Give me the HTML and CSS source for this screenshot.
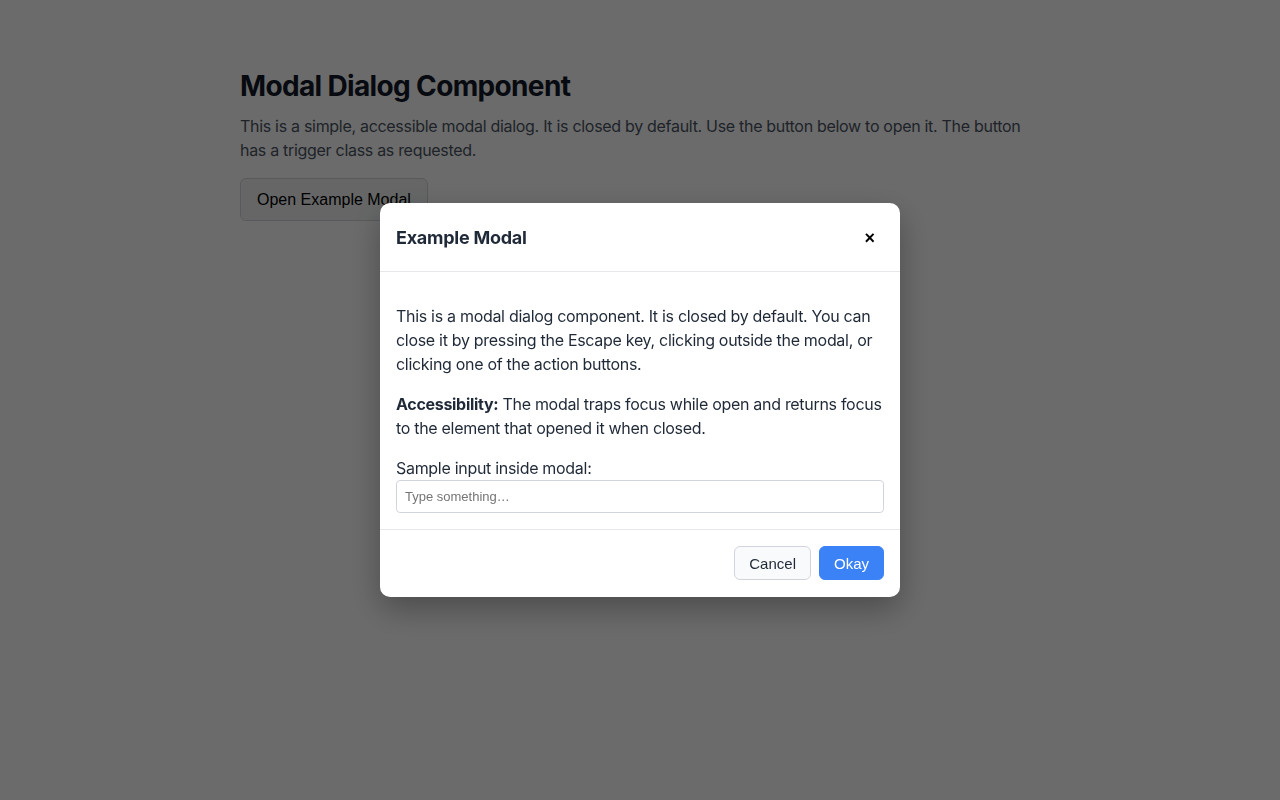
FILE: index.html
```html
<!DOCTYPE html>
<html lang="en">
<head>
<meta charset="utf-8">
<title>Modal Dialog Component</title>
<link rel="stylesheet" href="styles.css">
</head>
<body>
<main class="page">
  <h1 class="page-title">Modal Dialog Component</h1>
  <p class="page-lead">This is a simple, accessible modal dialog. It is closed by default. Use the button below to open it. The button has a trigger class as requested.</p>
  <button class="trigger" type="button">Open Example Modal</button>
</main>

<div class="overlay">
  <div class="modal" role="dialog" aria-modal="true" aria-labelledby="modal-title">
    <header class="modal-header">
      <h2 class="modal-title" id="modal-title">Example Modal</h2>
      <button class="modal-close" type="button" aria-label="Close">×</button>
    </header>
    <div class="modal-body">
      <p>This is a modal dialog component. It is closed by default. You can close it by pressing the Escape key, clicking outside the modal, or clicking one of the action buttons.</p>
      <p><strong>Accessibility:</strong> The modal traps focus while open and returns focus to the element that opened it when closed.</p>
      <label class="field-label" for="sample">Sample input inside modal:</label>
      <input class="field-input" id="sample" type="text" placeholder="Type something…">
    </div>
    <footer class="modal-footer">
      <button class="btn btn-secondary" type="button">Cancel</button>
      <button class="btn btn-primary" type="button">Okay</button>
    </footer>
  </div>
</div>
</body>
</html>
```

FILE: styles.css
```css
* { box-sizing: border-box; }

html, body {
  margin: 0;
  padding: 0;
  height: 100%;
}

body {
  font-family: Inter, "Noto Sans", "Liberation Sans", sans-serif;
  background: #ffffff;
  color: #111827;
}

.page {
  width: 800px;
  margin: 0 auto;
  padding-top: 69px;
}

.page-title {
  margin: 0 0 11px;
  font-size: 28px;
  line-height: 34px;
  font-weight: 700;
  color: #111827;
  letter-spacing: -0.65px;
}

.page-lead {
  margin: 0 0 16px;
  font-size: 16px;
  line-height: 24px;
  color: #4b5563;
  letter-spacing: -0.3px;
}

.trigger {
  font-family: "Liberation Sans", Arial, sans-serif;
  font-size: 16px;
  color: #000;
  background: #f3f4f6;
  border: 1px solid #d1d5db;
  border-radius: 6px;
  height: 43px;
  padding: 0 16px;
}

.overlay {
  position: fixed;
  inset: 0;
  background: rgba(0, 0, 0, 0.58);
  display: flex;
  justify-content: center;
  align-items: flex-start;
  padding-top: 203px;
}

.modal {
  width: 520px;
  background: #ffffff;
  border-radius: 10px;
  box-shadow: 0 12px 32px rgba(0, 0, 0, 0.3);
  overflow: hidden;
}

.modal-header {
  display: flex;
  align-items: center;
  justify-content: space-between;
  height: 69px;
  padding: 1px 16px 0;
  border-bottom: 1px solid #e5e7eb;
}

.modal-title {
  margin: 0;
  font-size: 18px;
  line-height: 24px;
  font-weight: 700;
  color: #1f2937;
  letter-spacing: -0.25px;
}

.modal-close {
  font-family: "Liberation Sans", Arial, sans-serif;
  font-size: 18px;
  font-weight: 700;
  line-height: 1;
  color: #000;
  background: transparent;
  border: 0;
  padding: 4px 9px 4px 8px;
  cursor: pointer;
}

.modal-body {
  padding: 32px 16px 16px;
  color: #1f2937;
  font-size: 16px;
  line-height: 24px;
  letter-spacing: -0.3px;
}

.modal-body p {
  margin: 0 0 16px;
}

.modal-body strong {
  font-weight: 700;
}

.field-label {
  display: block;
  font-size: 16px;
  line-height: 24px;
}

.field-input {
  display: block;
  width: 100%;
  height: 33px;
  padding: 0 8px;
  font-family: "Liberation Sans", Arial, sans-serif;
  font-size: 13px;
  letter-spacing: 0;
  color: #111827;
  border: 1px solid #d1d5db;
  border-radius: 4px;
  background: #fff;
}

.field-input::placeholder {
  color: #757575;
}

.modal-footer {
  display: flex;
  justify-content: flex-end;
  gap: 8px;
  padding: 16px 16px 17px;
  border-top: 1px solid #e5e7eb;
}

.btn {
  font-family: "Liberation Sans", Arial, sans-serif;
  font-size: 15px;
  height: 34px;
  padding: 0 14px;
  border-radius: 6px;
  cursor: pointer;
}

.btn-secondary {
  background: #f9fafb;
  color: #1f2937;
  border: 1px solid #d1d5db;
}

.btn-primary {
  background: #3b82f6;
  color: #ffffff;
  border: 1px solid #3b82f6;
}
```
